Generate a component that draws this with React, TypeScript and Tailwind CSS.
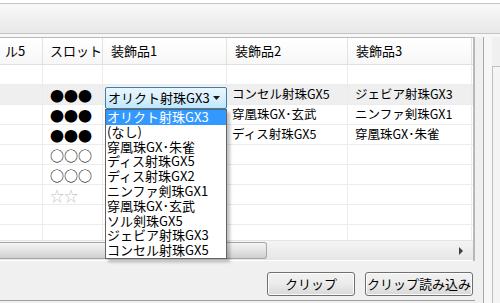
import React from 'react';

type Row = { slot?: string; star?: boolean; d2?: string; d3?: string; sel?: boolean };

const rows: Row[] = [
  { slot: '●●●', d2: 'コンセル射珠GX5', d3: 'ジェビア射珠GX3', sel: true },
  { slot: '●●●', d2: '穿凰珠GX･玄武', d3: 'ニンファ剣珠GX1' },
  { slot: '●●●', d2: 'ディス射珠GX5', d3: '穿凰珠GX･朱雀' },
  { slot: '○○○' },
  { slot: '○○○' },
  { slot: '☆☆', star: true },
  {},
  {},
];

const options = [
  'オリクト射珠GX3',
  '(なし)',
  '穿凰珠GX･朱雀',
  'ディス射珠GX5',
  'ディス射珠GX2',
  'ニンファ剣珠GX1',
  '穿凰珠GX･玄武',
  'ソル剣珠GX5',
  'ジェビア射珠GX3',
  'コンセル射珠GX5',
];

const cols = ['w-[43px]', 'w-[60px]', 'w-[124px]', 'w-[121px]', 'w-[124px]'];

function Button({ label, w }: { label: string; w: string }) {
  return (
    <button
      className={`${w} h-[24px] rounded-[3px] border border-[#707070] bg-gradient-to-b from-[#f2f2f2] via-[#ebebeb] to-[#d8d8d8] text-[13px] text-black shadow-[inset_0_0_0_1px_#fcfcfc]`}
    >
      {label}
    </button>
  );
}

export default function App() {
  return (
    <div className="w-[500px] h-[303px] overflow-hidden bg-[#f0f0f0] flex flex-col font-['Noto_Sans_CJK_JP','Noto_Sans',sans-serif] text-black">
      {/* top band */}
      <div className="h-[3px] bg-white" />
      <div className="h-[31px] border-y border-[#c4c4c4] bg-gradient-to-b from-[#f8f8f8] to-[#e8e8e8]" />
      <div className="h-[3px] bg-[#f7f7f7]" />

      <div className="flex flex-1 min-h-0">
        <div className="w-[475px] flex flex-col">
          {/* grid */}
          <div className="h-[224px] border-t border-r-2 border-[#b8b8b8] bg-white flex flex-col relative">
            {/* header */}
            <div className="h-[27px] flex border-b border-[#e0e0e0] bg-gradient-to-b from-white to-[#f7f7f7] text-[13px]">
              {['ル5', 'スロット', '装飾品1', '装飾品2', '装飾品3'].map((h, i) => (
                <div
                  key={h}
                  className={`${cols[i]} shrink-0 border-r border-[#e2e2e2] flex items-center ${i === 0 ? 'pl-[5px]' : i === 1 ? 'pl-[7px]' : 'pl-[8px]'}`}
                >
                  {h}
                </div>
              ))}
            </div>

            {/* body */}
            <div className="h-[175px] overflow-hidden relative text-[12.5px]">
              <div className="h-[20px] flex border-b border-[#ececec]">
                {cols.map((c, i) => (
                  <div key={i} className={`${c} shrink-0 border-r border-[#ececec]`} />
                ))}
              </div>
              {rows.map((r, idx) => (
                <div
                  key={idx}
                  className={`h-[20px] flex border-b border-[#ececec] ${r.sel ? 'bg-[#efefef]' : ''}`}
                >
                  <div className={`${cols[0]} shrink-0 border-r border-[#ececec]`} />
                  <div
                    className={`${cols[1]} shrink-0 border-r border-[#ececec] flex items-center pl-[7px] text-[14px] leading-none ${r.star ? 'text-[#c4c4c4]' : ''}`}
                  >
                    {r.slot}
                  </div>
                  <div className={`${cols[2]} shrink-0 border-r border-[#ececec]`} />
                  <div className={`${cols[3]} shrink-0 border-r border-[#ececec] flex items-center pl-[5px]`}>
                    {r.d2}
                  </div>
                  <div className={`${cols[4]} shrink-0 border-r border-[#ececec] flex items-center pl-[7px]`}>
                    {r.d3}
                  </div>
                </div>
              ))}
            </div>

            {/* horizontal scrollbar */}
            <div className="h-[20px] border-t border-[#e4e4e4] bg-gradient-to-b from-[#f4f4f4] to-[#e6e6e6] flex items-center">
              <div className="w-[267px] h-[17px] rounded-r-[3px] border border-l-0 border-[#a7a7a7] bg-gradient-to-b from-[#f3f3f3] via-[#e4e4e4] to-[#cfcfcf]" />
              <div className="flex-1" />
              <svg width="5" height="8" viewBox="0 0 5 8" className="mr-[9px]">
                <path d="M0 0 L4 4 L0 8 Z" fill="#404040" />
              </svg>
            </div>

            {/* dropdown */}
            <div className="absolute left-[105px] top-[49px] w-[122px] z-10">
              <div className="h-[22px] rounded-[2px] border border-[#3c7fb1] bg-gradient-to-b from-[#eaf6fd] via-[#d9f0fc] to-[#bee6fd] flex items-center pl-[2px] pr-[6px] text-[13px]">
                <span className="flex-1">オリクト射珠GX3</span>
                <svg width="7" height="4" viewBox="0 0 7 4">
                  <path d="M0 0 L7 0 L3.5 4 Z" fill="#1a1a1a" />
                </svg>
              </div>
              <div className="border border-[#646464] bg-white shadow-[3px_3px_3px_rgba(0,0,0,0.25)]">
                {options.map((o, i) => (
                  <div
                    key={o + i}
                    className={`h-[14.8px] text-[13px] leading-[14.8px] pl-[1px] whitespace-nowrap ${i === 0 ? 'bg-[#3399ff] text-white' : ''}`}
                  >
                    {o}
                  </div>
                ))}
              </div>
            </div>
          </div>

          {/* button bar */}
          <div className="flex-1 border-b border-[#a0a0a0] flex justify-end items-start gap-[10px] pt-[11px] pr-[2px] mb-[2px]">
            <Button label="クリップ" w="w-[88px]" />
            <Button label="クリップ読み込み" w="w-[108px]" />
          </div>
        </div>

        {/* right gutter */}
        <div className="flex-1 flex">
          <div className="w-[8px]" />
          <div className="flex-1 border-l border-[#a8a8a8] flex">
            <div className="w-[8px] bg-[#f7f7f7]" />
            <div className="flex-1 mt-[29px] border-l border-t border-[#c0c0c0] bg-[#f4f4f4]" />
          </div>
        </div>
      </div>
    </div>
  );
}
